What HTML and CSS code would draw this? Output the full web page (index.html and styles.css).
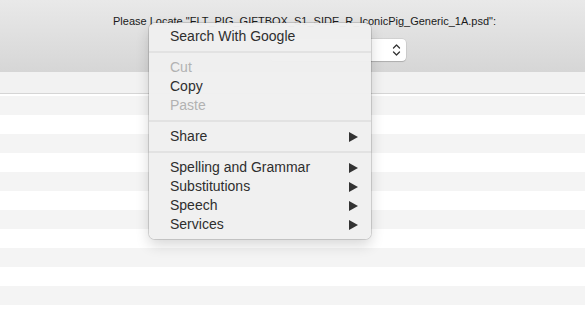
FILE: index.html
```html
<!DOCTYPE html>
<html>
<head>
<meta charset="utf-8">
<link rel="stylesheet" href="styles.css">
</head>
<body>
<div class="page">
  <div class="header">
    <div class="title">Please Locate "FLT_PIG_GIFTBOX_S1_SIDE_R_IconicPig_Generic_1A.psd":</div>
    <div class="select-row">
      <div class="select">
        <svg class="chev" width="9" height="14" viewBox="0 0 9 14"><path d="M1.5 5 L4.5 2 L7.5 5 M1.5 9 L4.5 12 L7.5 9" fill="none" stroke="#333" stroke-width="1.3" stroke-linecap="round" stroke-linejoin="round"/></svg>
      </div>
    </div>
  </div>
  <div class="toolbar"></div>
  <div class="rows">
    <div class="row alt"></div><div class="row"></div>
    <div class="row alt"></div><div class="row"></div>
    <div class="row alt"></div><div class="row"></div>
    <div class="row alt"></div><div class="row"></div>
    <div class="row alt"></div><div class="row"></div>
    <div class="row alt"></div><div class="row"></div>
  </div>

  <div class="menu">
    <div class="item">Search With Google</div>
    <div class="sep"></div>
    <div class="item disabled">Cut</div>
    <div class="item">Copy</div>
    <div class="item disabled">Paste</div>
    <div class="sep"></div>
    <div class="item sub">Share<span class="arrow"></span></div>
    <div class="sep"></div>
    <div class="item sub">Spelling and Grammar<span class="arrow"></span></div>
    <div class="item sub">Substitutions<span class="arrow"></span></div>
    <div class="item sub">Speech<span class="arrow"></span></div>
    <div class="item sub">Services<span class="arrow"></span></div>
  </div>
</div>
</body>
</html>
```

FILE: styles.css
```css
html, body {
  margin: 0;
  padding: 0;
  background: #ffffff;
}
.page {
  position: relative;
  width: 585px;
  height: 322px;
  overflow: hidden;
  font-family: "Liberation Sans", Arial, sans-serif;
}
.header {
  height: 72px;
  background: linear-gradient(#e9e9e9, #d6d6d6);
  box-sizing: border-box;
  padding-top: 14px;
}
.title {
  font-size: 11px;
  line-height: 14px;
  color: #1a1a1a;
  padding-left: 113px;
  white-space: nowrap;
}
.select-row {
  display: flex;
  justify-content: flex-start;
  padding-left: 270px;
  margin-top: 11px;
}
.select {
  width: 136px;
  height: 22px;
  background: #ffffff;
  border-radius: 4px;
  box-shadow: 0 0 0 0.5px rgba(0,0,0,0.12), 0 1px 1px rgba(0,0,0,0.15);
  display: flex;
  align-items: center;
  justify-content: flex-end;
  padding-right: 5px;
  box-sizing: border-box;
}
.toolbar {
  height: 21px;
  background: #f2f2f2;
  border-bottom: 1px solid #d5d5d5;
}
.rows {
  padding-top: 2px;
}
.row {
  height: 19px;
  background: #ffffff;
}
.row.alt {
  background: #f4f4f4;
}
.menu {
  position: absolute;
  left: 149px;
  top: 23px;
  width: 222px;
  box-sizing: border-box;
  padding: 4px 0 5px;
  background: rgba(240,240,240,0.97);
  border-radius: 6px;
  box-shadow: 0 0 0 1px rgba(0,0,0,0.13), 0 6px 14px rgba(0,0,0,0.16);
  font-size: 14px;
  color: #2e2e2e;
}
.item {
  height: 19px;
  line-height: 19px;
  padding-left: 21px;
  padding-right: 13px;
  display: flex;
  justify-content: space-between;
  align-items: center;
  white-space: nowrap;
}
.item.disabled {
  color: #b2b2b2;
}
.sep {
  height: 2px;
  background: #e2e2e2;
  margin: 5px 0 5px;
}
.arrow {
  width: 0;
  height: 0;
  border-top: 5px solid transparent;
  border-bottom: 5px solid transparent;
  border-left: 9px solid #333333;
}
```
